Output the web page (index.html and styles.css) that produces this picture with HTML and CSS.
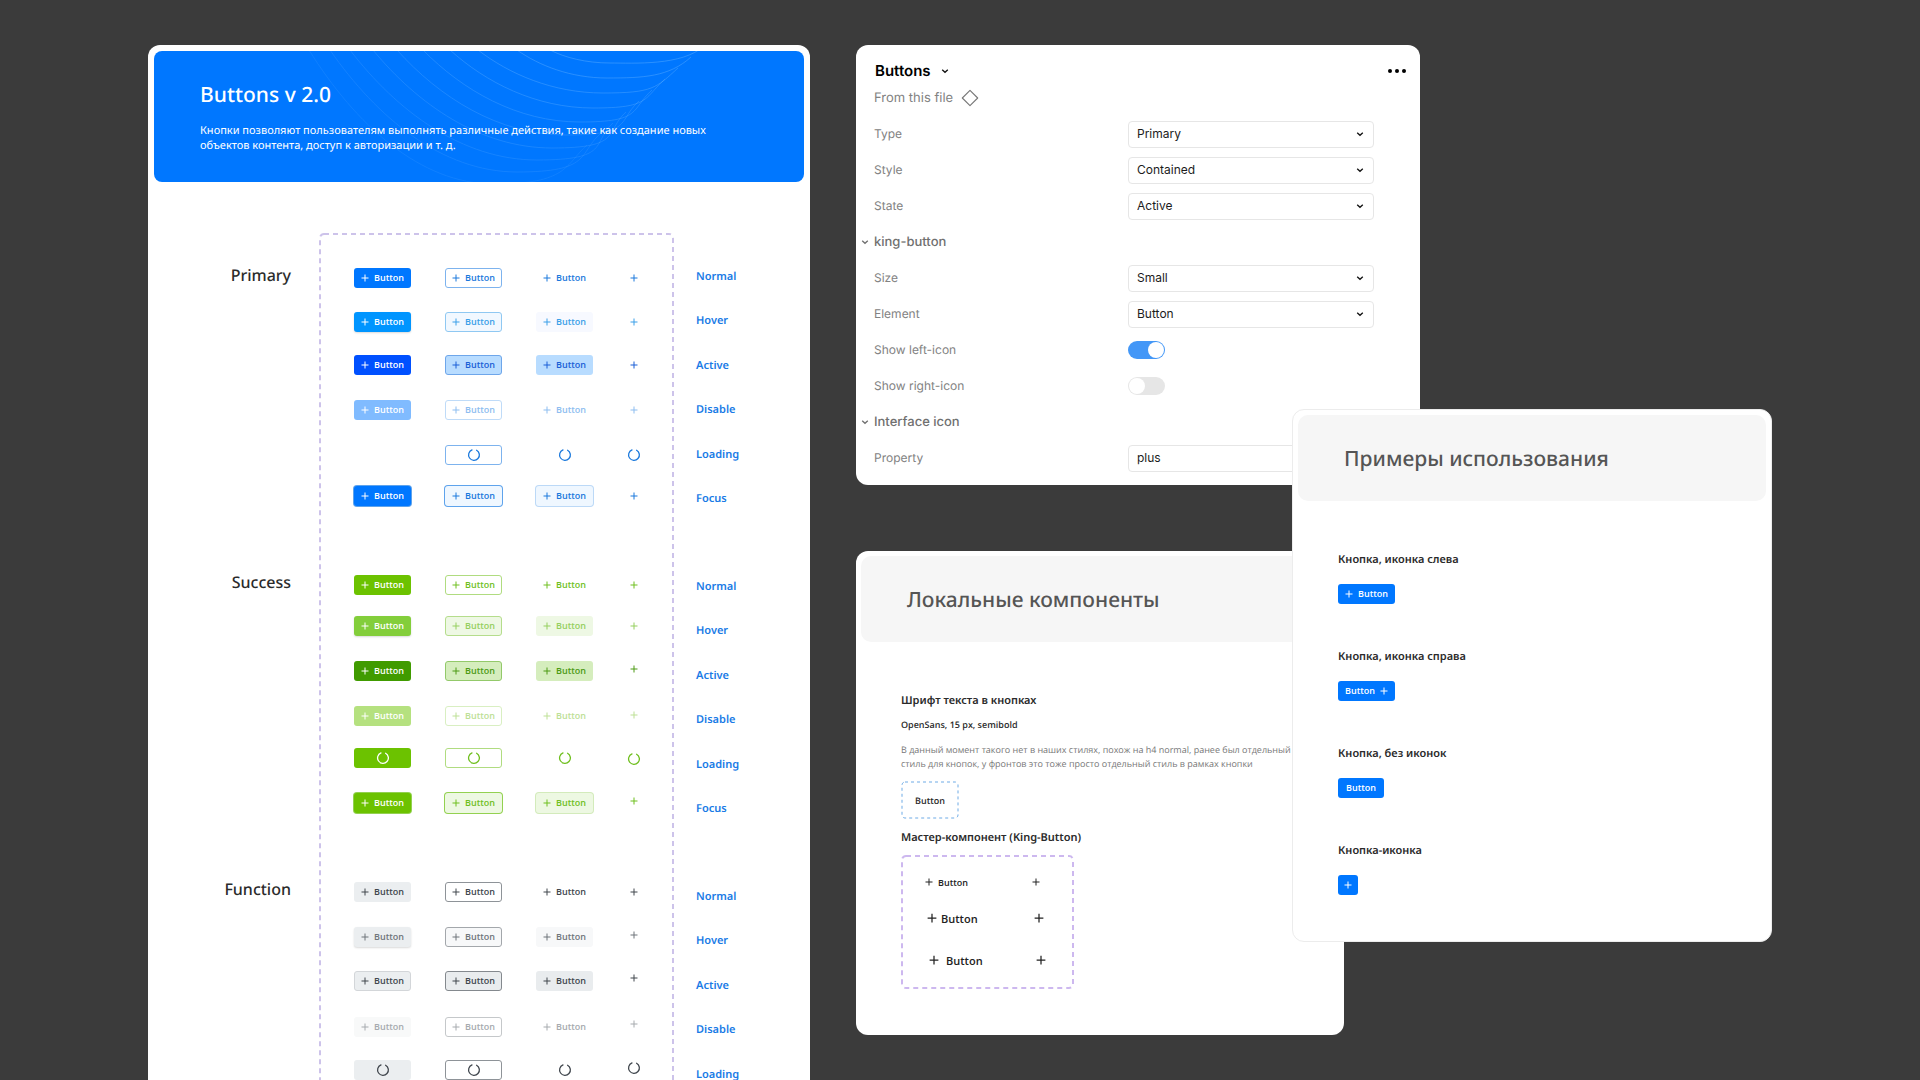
FILE: index.html
```html
<!DOCTYPE html>
<html lang="ru">
<head>
<meta charset="utf-8">
<meta name="viewport" content="width=device-width, initial-scale=1">
<title>Buttons v 2.0</title>
<link rel="stylesheet" href="styles.css">
</head>
<body>
<svg class="sprite" aria-hidden="true">
  <symbol id="plus" viewBox="0 0 8 8"><path d="M4 .5v7M.5 4h7" fill="none" stroke="currentColor" stroke-width="1"/></symbol>
  <symbol id="spin" viewBox="0 0 14 14"><path d="M5 1.9a5.4 5.4 0 1 0 4.600.3" fill="none" stroke="currentColor" stroke-width="1.3" stroke-linecap="round"/></symbol>
  <symbol id="chevron" viewBox="0 0 8 8"><path d="M1.2 2.7 4 5.3l2.800-2.600" fill="none" stroke="currentColor" stroke-width="1.3"/></symbol>
</svg>
<main class="board">
  <article class="card catalog">
    <header class="hero">
      <svg class="waves" id="waves" viewBox="0 0 650 131" preserveAspectRatio="xMidYMin slice" aria-hidden="true"></svg>
      <h1>Buttons v 2.0</h1>
      <p>Кнопки позволяют пользователям выполнять различные действия, такие как создание новых объектов контента, доступ к авторизации и т. д.</p>
    </header>
    <div class="catalog-body">
      <div class="kinds"><h2>Primary</h2><h2>Success</h2><h2>Function</h2></div>
      <div class="frame" id="frame"></div>
      <div class="states" id="states"></div>
    </div>
  </article>

  <div class="side">
    <section class="card inspector">
      <div class="inspector-head">
        <h2>Buttons</h2>
        <svg class="chev"><use href="#chevron"/></svg>
        <button class="more" aria-label="More"><i></i><i></i><i></i></button>
      </div>
      <div class="source">From this file
        <svg class="diamond" viewBox="0 0 18 18"><path d="M9 1.300 16.700 9 9 16.700 1.300 9Z" fill="none" stroke="#777" stroke-width="1.100" stroke-linejoin="round"/></svg>
      </div>
      <div class="props">
        <div class="prop"><label for="p1">Type</label><span class="pick"><select id="p1"><option>Primary</option></select><svg class="chev"><use href="#chevron"/></svg></span></div>
        <div class="prop"><label for="p2">Style</label><span class="pick"><select id="p2"><option>Contained</option></select><svg class="chev"><use href="#chevron"/></svg></span></div>
        <div class="prop"><label for="p3">State</label><span class="pick"><select id="p3"><option>Active</option></select><svg class="chev"><use href="#chevron"/></svg></span></div>
        <h3 class="prop"><svg class="chev"><use href="#chevron"/></svg>king-button</h3>
        <div class="prop"><label for="p4">Size</label><span class="pick"><select id="p4"><option>Small</option></select><svg class="chev"><use href="#chevron"/></svg></span></div>
        <div class="prop"><label for="p5">Element</label><span class="pick"><select id="p5"><option>Button</option></select><svg class="chev"><use href="#chevron"/></svg></span></div>
        <div class="prop"><label for="p6">Show left-icon</label><span class="pick"><input type="checkbox" id="p6" class="switch" checked></span></div>
        <div class="prop"><label for="p7">Show right-icon</label><span class="pick"><input type="checkbox" id="p7" class="switch"></span></div>
        <h3 class="prop"><svg class="chev"><use href="#chevron"/></svg>Interface icon</h3>
        <div class="prop"><label for="p8">Property</label><span class="pick"><select id="p8"><option>plus</option></select></span></div>
      </div>
    </section>

    <section class="card local">
      <header class="banner"><h2>Локальные компоненты</h2></header>
      <div class="local-body">
        <h3>Шрифт текста в кнопках</h3>
        <h4>OpenSans, 15 px, semibold</h4>
        <p>В данный момент такого нет в наших стилях, похож на h4 normal, ранее был отдельный стиль для кнопок, у фронтов это тоже просто отдельный стиль в рамках кнопки</p>
        <div class="sample"><svg class="outline"><rect class="dash-blue" x="1" y="1" rx="3"/></svg>Button</div>
        <h3>Мастер-компонент (King-Button)</h3>
        <div class="master">
          <svg class="outline"><rect class="dash-purple" x="1" y="1" rx="4"/></svg>
          <div class="king king-s"><button class="bare"><svg><use href="#plus"/></svg>Button</button><button class="bare" aria-label="Add"><svg><use href="#plus"/></svg></button></div>
          <div class="king king-m"><button class="bare"><svg><use href="#plus"/></svg>Button</button><button class="bare" aria-label="Add"><svg><use href="#plus"/></svg></button></div>
          <div class="king king-l"><button class="bare"><svg><use href="#plus"/></svg>Button</button><button class="bare" aria-label="Add"><svg><use href="#plus"/></svg></button></div>
        </div>
      </div>
    </section>

    <section class="card examples">
      <header class="banner"><h2>Примеры использования</h2></header>
      <div class="examples-body">
        <h3>Кнопка, иконка слева</h3>
        <button class="btn primary contained"><svg><use href="#plus"/></svg>Button</button>
        <h3>Кнопка, иконка справа</h3>
        <button class="btn primary contained">Button<svg><use href="#plus"/></svg></button>
        <h3>Кнопка, без иконок</h3>
        <button class="btn primary contained text-only">Button</button>
        <h3>Кнопка-иконка</h3>
        <button class="btn primary contained icon-only" aria-label="Add"><svg><use href="#plus"/></svg></button>
      </div>
    </section>
  </div>
</main>
<script src="script.js"></script>
</body>
</html>
```
FILE: script.js
```js
const kinds = ["primary", "success", "function"];
const states = ["Normal", "Hover", "Active", "Disable", "Loading", "Focus"];
const styles = ["contained", "outlined", "ghost"];
const icon = (name) => `<svg class="${name}"><use href="#${name}"/></svg>`;

const cell = (kind, state, style) => {
  if (kind === "primary" && state === "Loading" && style === "contained") return "<span></span>";
  const loading = state === "Loading";
  const content = loading ? icon("spin") : icon("plus") + (style === "icon" ? "" : "Button");
  const label = loading || style === "icon" ? ` aria-label="${state}"` : "";
  return `<button class="btn ${kind} ${style} ${state.toLowerCase()}"${label}>${content}</button>`;
};

const rowsOf = (kind) => (kind === "function" ? states.slice(0, 5) : states);

document.getElementById("frame").innerHTML =
  `<svg class="outline"><rect class="dash-frame" x="1" y="1" rx="4"/></svg>` +
  kinds.map((kind) => {
    const variants = rowsOf(kind).map((s) => styles.map((v) => cell(kind, s, v)).join("")).join("");
    const icons = rowsOf(kind).map((s) => cell(kind, s, "icon")).join("");
    return `<div class="group group-${kind}"><div class="variants">${variants}</div><div class="icons">${icons}</div></div>`;
  }).join("");

document.getElementById("states").innerHTML = kinds
  .map((kind) => `<ul>${rowsOf(kind).map((s) => `<li>${s}</li>`).join("")}</ul>`)
  .join("");

// Fan of arcs in the hero banner: start x on the top edge, then the lowest point.
const arcs = [
  [396, 456, 12], [363, 453, 27], [324, 449, 42], [296, 439, 57], [269, 426, 71],
  [243, 412, 84], [219, 398, 97], [196, 383, 109], [176, 363, 121], [155, 340, 133],
];
document.getElementById("waves").innerHTML = arcs
  .map(([sx, bx, by], i) => {
    const ex = 550 - i * 13;
    const ey = -5 + i * 11;
    const dx = bx - sx;
    const opacity = (0.34 - i * 0.024).toFixed(2);
    return `<path d="M${sx} -1C${sx + dx * 0.25} ${by * 0.55} ${bx - dx * 0.4} ${by} ${bx} ${by}S${ex - 22} ${ey + 20} ${ex} ${ey}" stroke-opacity="${opacity}"/>`;
  })
  .join("");
```
FILE: styles.css
```css
* { box-sizing: border-box; }
body { margin: 0; background: #3b3b3b; font-family: "Open Sans", "Noto Sans", sans-serif; color: #2b2b2b; text-rendering: geometricPrecision; }
h1, h2, h3, h4, p, ul { margin: 0; padding: 0; }
ul { list-style: none; }
button { font: inherit; color: inherit; background: none; border: 0; padding: 0; }
.sprite { position: absolute; width: 0; height: 0; }

.board {
  height: 100vh;
  overflow: hidden;
  display: grid;
  grid-template-columns: minmax(0, 662fr) minmax(0, 916fr);
  column-gap: 46px;
  padding: 45px 148px 0;
}
.card { background: #fff; border-radius: 12px; isolation: isolate; }

/* Catalogue of states */
.catalog { padding: 6px; border-radius: 12px 12px 0 0; }
.hero { position: relative; height: 131px; padding: 30px 46px 0; border-radius: 8px; background: #07f; color: #fff; overflow: hidden; }
.waves { position: absolute; inset: 0; width: 100%; height: 100%; fill: none; stroke: #7fc4ff; }
.hero h1 { position: relative; font-family: "Noto Sans", sans-serif; font-size: 21px; line-height: 28px; font-weight: 500; }
.hero p { position: relative; width: 540px; margin-top: 14px; font-family: "Noto Sans", sans-serif; font-size: 11px; line-height: 15px; }
.catalog-body { display: flex; padding-top: 51px; }
.kinds { width: 137px; margin-right: 28px; padding-top: 30px; text-align: right; }
.kinds h2 { height: 307px; font-family: "Noto Sans", sans-serif; font-size: 16px; line-height: 24px; font-weight: 500; }
.frame { position: relative; width: 355px; padding-top: 35px; overflow: hidden; }
.outline { position: absolute; inset: 0; width: 100%; height: 100%; pointer-events: none; }
.outline rect { width: calc(100% - 2px); height: calc(100% - 2px); fill: none; }
.dash-frame { stroke: #cdc3ea; stroke-width: 2; stroke-dasharray: 5 4; }
.frame .dash-frame { height: 200%; }
.group { display: flex; height: 307px; padding-left: 35px; gap: 31px; }
.variants { display: grid; grid-template-columns: 57px 57px 57px; column-gap: 34px; align-items: start; align-content: start; }
.icons { display: grid; align-items: start; align-content: start; }
.group-primary .variants, .group-primary .icons { grid-template-rows: 44px 43px 45px 45px 41px 20px; }
.group-success .variants { grid-template-rows: 41px 45px 45px 42px 45px 20px; }
.group-success .icons { grid-template-rows: 41px 43px 46px 44px 42px 20px; }
.group-function .variants { grid-template-rows: 45px 44px 46px 43px 20px; }
.group-function .icons { grid-template-rows: 43px 43px 46px 44px 20px; }
.states { margin-left: 22px; padding-top: 22px; }
.states ul { height: 310px; display: grid; grid-template-rows: 44px 45px 44px 45px 44px 44px; align-content: start; }
.states li { font-family: "Noto Sans", sans-serif; font-size: 11px; line-height: 44px; font-weight: 600; color: #1a7be6; }

/* Buttons */
.btn {
  display: flex; align-items: center; justify-content: center; gap: 5px;
  width: 57px; height: 20px; border: 1px solid transparent; border-radius: 3px;
  font-size: 9px; line-height: 12px; font-weight: 600;
}
.btn svg { width: 8px; height: 8px; flex: none; }
.btn svg.spin { width: 14px; height: 14px; }
.btn.icon, .btn.icon-only { width: 20px; }
.btn.text-only { width: 46px; }

.primary { --c: #0077ff; --ink: #1a78dc; --line: #7db3ee; --tint: #fff; }
.primary.hover { --c: #0095ff; --ink: #3a9fe8; --line: #8fc8f2; --tint: #f1f8ff; }
.primary.active { --c: #0050ff; --ink: #1a5fd6; --line: #6ea6ea; --tint: #b8dcff; }
.primary.disable { --c: #80bbff; --ink: #8dbdf0; --line: #bfdbf8; }
.primary.focus { --line: #5ea3ec; --tint: #eff7ff; }
.success { --c: #6cc200; --ink: #6fbf1e; --line: #b0dc80; --tint: #fff; }
.success.hover { --c: #83ce3b; --ink: #95cf5e; --line: #b5dd8c; --tint: #eef8e4; }
.success.active { --c: #409b00; --ink: #4c9a14; --line: #93c96a; --tint: #d5edbd; }
.success.disable { --c: #b5e17f; --ink: #bde095; --line: #d9efc2; }
.success.focus { --line: #93d150; --tint: #edf8e2; }
.function { --c: #ebeef0; --ink: #40464d; --line: #8e9398; --tint: #fff; }
.function.hover { --ink: #6f757b; --line: #a3a7ab; --tint: #f7f8f9; }
.function.active { --line: #84898e; --tint: #e9ecee; }
.function.disable { --c: #f8f9f9; --ink: #a6aaae; --line: #c5c8ca; }

.contained { background: var(--c); color: #fff; }
.contained.hover { box-shadow: 0 1px 2px rgba(0, 0, 0, .15); }
.contained.function { color: var(--ink); }
.contained.function.active { border-color: #d3d6d9; }
.contained.focus { box-shadow: 0 0 0 1px var(--line); }
.outlined { background: var(--tint); border-color: var(--line); color: var(--ink); }
.outlined.focus { box-shadow: 0 0 0 1px var(--line); border-color: transparent; }
.ghost, .btn.icon { color: var(--ink); }
.ghost.hover, .ghost.active, .ghost.focus { background: var(--tint); }
.ghost.primary.hover { background: #f7f9ff; }
.ghost.focus { box-shadow: 0 0 0 1px #bcd9f7; }
.ghost.success.focus { box-shadow: 0 0 0 1px #d3ebbb; }

/* Right side: three overlapping frames */
.side {
  display: grid;
  grid-template-columns: 436fr 52fr 76fr 352fr;
  grid-template-rows: auto auto;
  row-gap: 66px;
  align-items: start;
  align-content: start;
}
.inspector { grid-area: 1 / 1 / 2 / 4; padding: 14px 0 9px; font-family: Inter, "Open Sans", sans-serif; color: #111; }
.local { grid-area: 2 / 1 / 3 / 3; }
.examples { grid-area: 1 / 2 / 3 / 5; margin-top: 364px; }

.chev { width: 8px; height: 8px; flex: none; }
.inspector-head { display: flex; align-items: center; height: 24px; padding: 0 14px 0 19px; gap: 10px; }
.inspector-head h2 { font-size: 15px; line-height: 24px; font-weight: 600; color: #000; }
.more { display: flex; gap: 3px; margin-left: auto; }
.more i { width: 4px; height: 4px; border-radius: 50%; background: #000; }
.source { display: flex; align-items: center; gap: 8px; height: 29px; padding-left: 18px; font-size: 13px; color: #828282; }
.diamond { width: 18px; height: 18px; }
.props { padding: 4px 46px 0 18px; }
.prop { display: flex; align-items: center; justify-content: space-between; height: 36px; font-size: 12px; line-height: 26px; color: #828282; }
.prop label { flex: 1; }
h3.prop { justify-content: flex-start; gap: 5px; margin-left: -13px; font-size: 13px; font-weight: 500; color: #707070; }
.pick { position: relative; display: flex; align-items: center; flex: 0 0 246px; }
.pick select {
  width: 100%; height: 27px; padding: 0 8px; appearance: none;
  border: 1px solid #e6e6e6; border-radius: 4px; background: #fff;
  font: 12px/24px Inter, sans-serif; color: #1c1c1c;
}
.pick .chev { position: absolute; right: 10px; color: #111; }
.switch {
  appearance: none; display: flex; align-items: center; width: 37px; height: 18px; margin: 0; padding: 1px;
  border-radius: 9px; background: #e6e6e6;
}
.switch::before { content: ""; width: 16px; height: 16px; border-radius: 50%; background: #fff; }
.switch:checked { background: #4397f7; justify-content: flex-end; }

.banner { height: 86px; padding: 2px 46px 0; display: flex; align-items: center; border-radius: 10px; background: #f6f6f6; }
.banner h2 { font-family: "Noto Sans", sans-serif; font-size: 21px; line-height: 28px; font-weight: 500; color: #555; }
.local, .examples { padding: 5px; }
.local-body { padding: 50px 40px 41px; }
.local-body h3, .examples-body h3 { font-family: "Noto Sans", sans-serif; font-size: 11px; line-height: 18px; font-weight: 600; }
.local-body h4 { margin-top: 8px; font-size: 9px; line-height: 14px; font-weight: 600; }
.local-body p { width: 390px; margin-top: 11px; font-size: 9px; line-height: 14px; color: #777; }
.sample { position: relative; display: flex; align-items: center; justify-content: center; width: 58px; height: 38px; margin: 10px 0; font-size: 9px; font-weight: 600; }
.dash-blue { stroke: #6eabe6; stroke-width: 1; stroke-dasharray: 3 3; }
.master { position: relative; width: 173px; height: 134px; margin-top: 8px; padding: 18px 0 0 24px; }
.dash-purple { stroke: #cdb8ef; stroke-width: 2; stroke-dasharray: 5 4; }
.king { display: flex; align-items: center; justify-content: space-between; width: 115px; font-weight: 600; color: #222; }
.bare { display: flex; align-items: center; gap: 5px; }
.bare svg { width: 8px; height: 8px; }
.king-s { height: 18px; font-size: 9px; }
.king-m { width: 119px; height: 54px; padding-left: 2px; font-size: 11px; }
.king-m .bare { gap: 4px; }
.king-l { width: 121px; height: 30px; padding-left: 4px; font-size: 11px; }
.king-l .bare { gap: 7px; }
.king-m svg, .king-l svg { width: 10px; height: 10px; }

.examples { border: 1px solid #ececec; }
.examples-body { padding: 50px 40px 41px; }
.examples-body .btn { margin: 15px 0 44px; }
.examples-body .btn:last-child { margin-bottom: 0; }
```
